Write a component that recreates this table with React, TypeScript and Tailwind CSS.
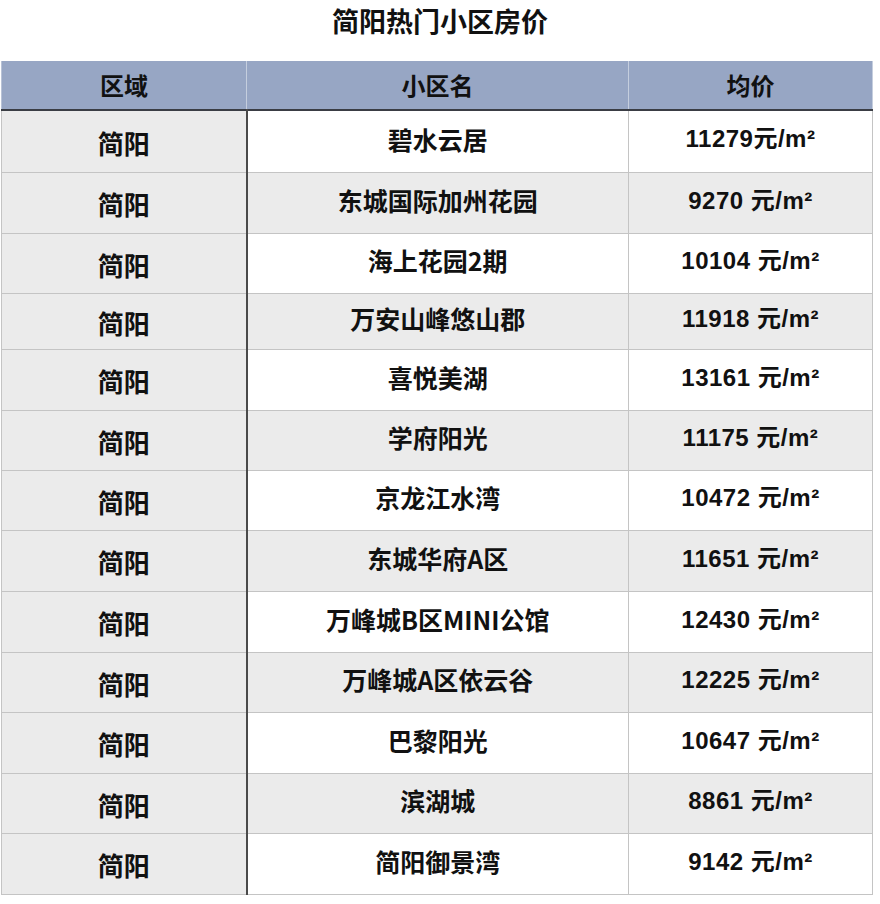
import React from "react";

type Row = { area: string; name: string; price: string; h: number };

const rows: Row[] = [
  { area: "简阳", name: "碧水云居", price: "11279元/m²", h: 62 },
  { area: "简阳", name: "东城国际加州花园", price: "9270 元/m²", h: 61 },
  { area: "简阳", name: "海上花园2期", price: "10104 元/m²", h: 60 },
  { area: "简阳", name: "万安山峰悠山郡", price: "11918 元/m²", h: 56 },
  { area: "简阳", name: "喜悦美湖", price: "13161 元/m²", h: 61 },
  { area: "简阳", name: "学府阳光", price: "11175 元/m²", h: 60 },
  { area: "简阳", name: "京龙江水湾", price: "10472 元/m²", h: 60 },
  { area: "简阳", name: "东城华府A区", price: "11651 元/m²", h: 61 },
  { area: "简阳", name: "万峰城B区MINI公馆", price: "12430 元/m²", h: 61 },
  { area: "简阳", name: "万峰城A区依云谷", price: "12225 元/m²", h: 60 },
  { area: "简阳", name: "巴黎阳光", price: "10647 元/m²", h: 61 },
  { area: "简阳", name: "滨湖城", price: "8861 元/m²", h: 60 },
  { area: "简阳", name: "简阳御景湾", price: "9142 元/m²", h: 61 },
];

const cjk = "font-['PingFang_SC','Noto_Sans_CJK_SC',sans-serif]";
const num = "font-['Liberation_Sans','Noto_Sans_CJK_SC',sans-serif]";

const App: React.FC = () => {
  return (
    <div className="w-[880px] h-[904px] bg-white text-[#111]">
      <h1
        className={`${cjk} h-[61px] pb-[18px] flex items-center justify-center text-[27px] font-bold`}
      >
        简阳热门小区房价
      </h1>

      <table className="ml-px w-[871px] border-collapse table-fixed">
        <colgroup>
          <col className="w-[245px]" />
          <col className="w-[382px]" />
          <col className="w-[244px]" />
        </colgroup>
        <thead>
          <tr className="h-[49px] bg-[#97a6c4] border-b-2 border-[#3a3d44]">
            <th className={`${cjk} text-[24px] font-bold border-l border-[#b8c2d6] border-r border-r-[#c5cede]`}>
              区域
            </th>
            <th className={`${cjk} text-[24px] font-bold border-r border-[#c5cede]`}>
              小区名
            </th>
            <th className={`${cjk} text-[24px] font-bold border-r border-[#c5cede]`}>
              均价
            </th>
          </tr>
        </thead>
        <tbody>
          {rows.map((r, i) => {
            const gray = i % 2 === 1;
            return (
              <tr
                key={i}
                style={{ height: r.h }}
                className="border-b border-[#c4c4c4]"
              >
                <td
                  className={`${cjk} bg-[#ebebeb] text-center text-[26px] font-bold border-l border-[#c4c4c4] border-r-2 border-r-[#4a4a4a] pt-[2px]`}
                >
                  {r.area}
                </td>
                <td
                  className={`${cjk} ${gray ? "bg-[#ebebeb]" : "bg-white"} text-center text-[25px] font-semibold border-r border-[#c4c4c4] pb-[4px]`}
                >
                  {r.name}
                </td>
                <td
                  className={`${num} ${gray ? "bg-[#ebebeb]" : "bg-white"} text-center text-[24px] font-bold border-r border-[#c4c4c4] pb-[4px] tracking-[0.5px]`}
                >
                  {r.price}
                </td>
              </tr>
            );
          })}
        </tbody>
      </table>
    </div>
  );
};

export default App;
